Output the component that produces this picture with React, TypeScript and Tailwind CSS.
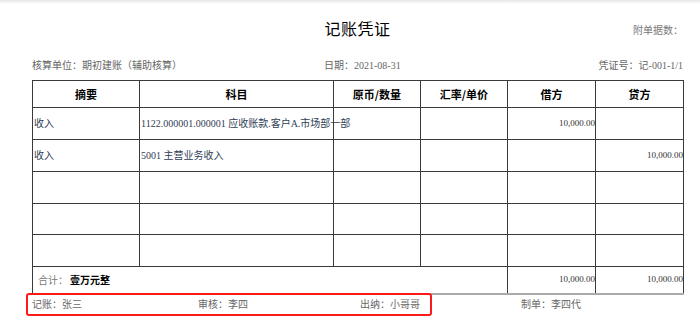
import React from "react";

const serif = { fontFamily: '"Liberation Serif", "Noto Sans CJK SC", serif' };

export default function App() {
  const cols = [107, 194, 87, 87, 88, 88];
  const rows: [string, string, string, string][] = [
    ["收入", "1122.000001.000001 应收账款.客户A.市场部一部", "10,000.00", ""],
    ["收入", "5001 主营业务收入", "", "10,000.00"],
    ["", "", "", ""],
    ["", "", "", ""],
    ["", "", "", ""],
  ];
  const rowH = [32, 32, 32, 31, 32];
  const bd = "border border-[#3a3a3a]";
  return (
    <div
      className="relative w-[700px] h-[334px] bg-white overflow-hidden text-[#333]"
      style={{ fontFamily: '"Noto Sans CJK SC", "Liberation Sans", sans-serif' }}
    >
      <div className="absolute left-0 top-0 w-full h-[4px] bg-gradient-to-b from-[#e6e6e6] to-white" />
      <div className="pl-[32px] w-[683px]">
        <div className="relative h-[52px] flex items-center justify-center pt-[4px]">
          <span className="text-[16px] text-black tracking-[0.5px]">记账凭证</span>
          <span className="absolute right-0 top-[23px] text-[10px] text-[#777]" style={serif}>
            附单据数：
          </span>
        </div>
        <div className="h-[28px] flex items-center text-[10px] text-[#666] pb-[1px]" style={serif}>
          <span className="w-[292px]">核算单位：期初建账（辅助核算）</span>
          <span className="flex-1">日期：2021-08-31</span>
          <span>凭证号：记-001-1/1</span>
        </div>
        <table className="border-collapse table-fixed w-[651px] border border-[#555]">
          <colgroup>
            {cols.map((w, i) => (
              <col key={i} style={{ width: w }} />
            ))}
          </colgroup>
          <thead>
            <tr className="h-[27px]">
              {["摘要", "科目", "原币/数量", "汇率/单价", "借方", "贷方"].map((h) => (
                <th key={h} className={`${bd} text-[11px] font-bold text-black text-center p-0`}>
                  {h}
                </th>
              ))}
            </tr>
          </thead>
          <tbody>
            {rows.map((r, i) => (
              <tr key={i} style={{ height: rowH[i] }}>
                <td className={`${bd} text-[10px] text-[#2f3d55] pl-[1px] align-middle p-0`} style={serif}>
                  {r[0]}
                </td>
                <td className={`${bd} text-[10px] text-[#2f3d55] pl-[1px] p-0 whitespace-nowrap`} style={serif}>
                  {r[1]}
                </td>
                <td className={`${bd} p-0`} />
                <td className={`${bd} p-0`} />
                <td className={`${bd} text-[9px] text-right text-[#333] p-0 pr-0`} style={serif}>
                  {r[2]}
                </td>
                <td className={`${bd} text-[9px] text-right text-[#333] p-0`} style={serif}>
                  {r[3]}
                </td>
              </tr>
            ))}
            <tr className="h-[27px]">
              <td colSpan={4} className={`${bd} p-0 pl-[5px] text-[10px] border-b-[#aaa] border-b-2`}>
                <span className="text-[#777]" style={serif}>合计：</span>
                <span className="ml-[2px] font-bold text-black">壹万元整</span>
              </td>
              <td className={`${bd} text-[9px] text-right text-[#333] p-0 border-b-[#aaa] border-b-2`} style={serif}>
                10,000.00
              </td>
              <td className={`${bd} text-[9px] text-right text-[#333] p-0 border-b-[#aaa] border-b-2`} style={serif}>
                10,000.00
              </td>
            </tr>
          </tbody>
        </table>
        <div className="relative flex h-[20px] items-center text-[10px] text-[#666]" style={serif}>
          <span className="w-[166px]">记账：张三</span>
          <span className="w-[162px]">审核：李四</span>
          <span className="w-[161px]">出纳：小哥哥</span>
          <span>制单：李四代</span>
          <div className="absolute left-[-6px] top-[-2px] w-[406px] h-[23px] border-2 border-[#ff1a1a] rounded-[3px]" />
        </div>
      </div>
    </div>
  );
}
